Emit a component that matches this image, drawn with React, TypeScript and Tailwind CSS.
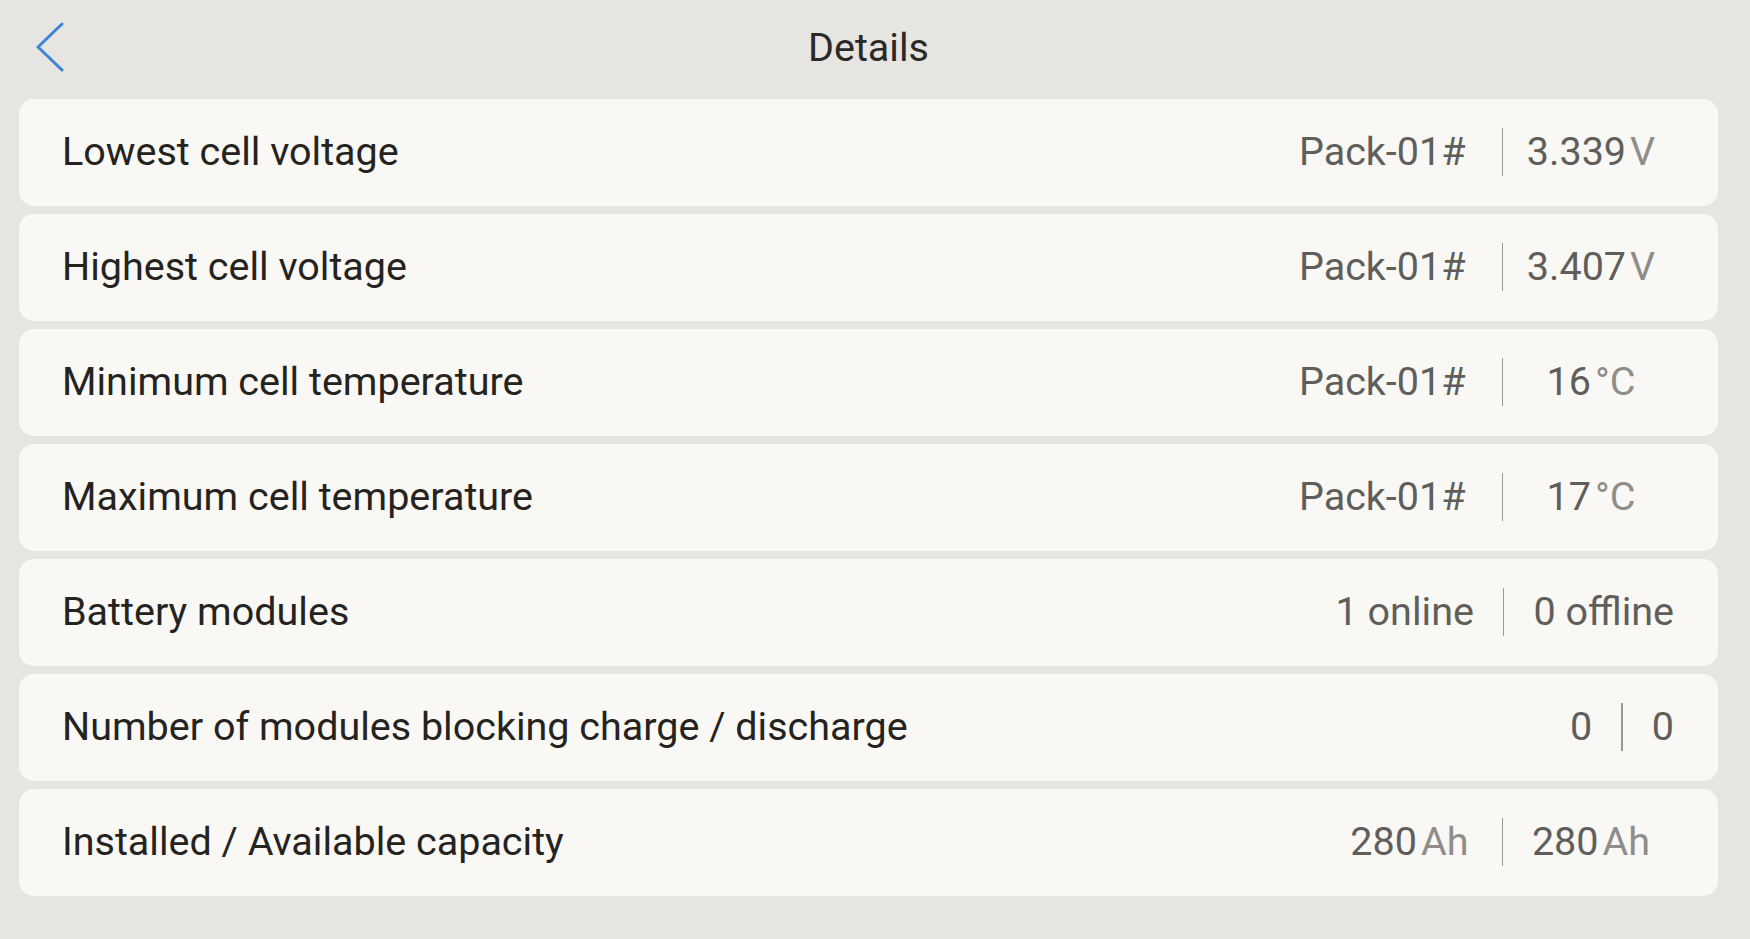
import React from "react";

type Row = {
  label: string;
  left: { num: string; unit?: string };
  right: { num: string; unit?: string };
  plain?: boolean;
  tight?: boolean;
};

const rows: Row[] = [
  { label: "Lowest cell voltage", left: { num: "Pack-01#" }, right: { num: "3.339", unit: "V" } },
  { label: "Highest cell voltage", left: { num: "Pack-01#" }, right: { num: "3.407", unit: "V" } },
  { label: "Minimum cell temperature", left: { num: "Pack-01#" }, right: { num: "16", unit: "°C" } },
  { label: "Maximum cell temperature", left: { num: "Pack-01#" }, right: { num: "17", unit: "°C" } },
  { label: "Battery modules", left: { num: "1 online" }, right: { num: "0 offline" }, plain: true },
  { label: "Number of modules blocking charge / discharge", left: { num: "0" }, right: { num: "0" }, plain: true },
  { label: "Installed / Available capacity", left: { num: "280", unit: "Ah" }, right: { num: "280", unit: "Ah" }, tight: true },
];

function Val({ v }: { v: { num: string; unit?: string } }) {
  return (
    <span className="whitespace-nowrap">
      <span className="text-[#5f5e5a]">{v.num}</span>
      {v.unit ? <span className="ml-[4px] text-[#8e8d89]">{v.unit}</span> : null}
    </span>
  );
}

export default function App() {
  return (
    <div
      className="min-h-screen w-full bg-[#e6e5e1] pl-[19px] pr-[32px]"
      style={{ fontFamily: "Roboto, 'Noto Sans', sans-serif" }}
    >
      <header className="grid h-[94px] grid-cols-[1fr_auto_1fr] items-center">
        <div className="flex items-center pl-[17px]">
          <svg width="30" height="52" viewBox="0 0 30 52" fill="none">
            <path
              d="M26 3 L2 26 L26 49"
              stroke="#3c84d6"
              strokeWidth="3"
              strokeLinecap="round"
              strokeLinejoin="round"
            />
          </svg>
        </div>
        <h1 className="pt-[2px] text-[39.5px] leading-none text-[#2a2926]">Details</h1>
        <div />
      </header>
      <div className="mt-[5px] flex flex-col gap-[8px]">
        {rows.map((r) => (
          <div
            key={r.label}
            className="flex h-[107px] items-center justify-between rounded-[15px] bg-[#f9f8f5] pb-[2px] pl-[43px] pr-[44px] text-[39.5px] leading-none"
          >
            <span className="text-[#252320]">{r.label}</span>
            {r.plain ? (
              <div className="flex items-center">
                <Val v={r.left} />
                <span className="mx-[29px] h-[48px] w-[1.5px] bg-[#9a9995]" />
                <Val v={r.right} />
              </div>
            ) : (
              <div className="flex items-center">
                <Val v={r.left} />
                <span
                  className={
                    r.tight
                      ? "ml-[33px] h-[48px] w-[1.5px] bg-[#9a9995]"
                      : "ml-[36px] h-[48px] w-[1.5px] bg-[#9a9995]"
                  }
                />
                <div className="ml-[5px] w-[166px] text-center">
                  <Val v={r.right} />
                </div>
              </div>
            )}
          </div>
        ))}
      </div>
    </div>
  );
}
